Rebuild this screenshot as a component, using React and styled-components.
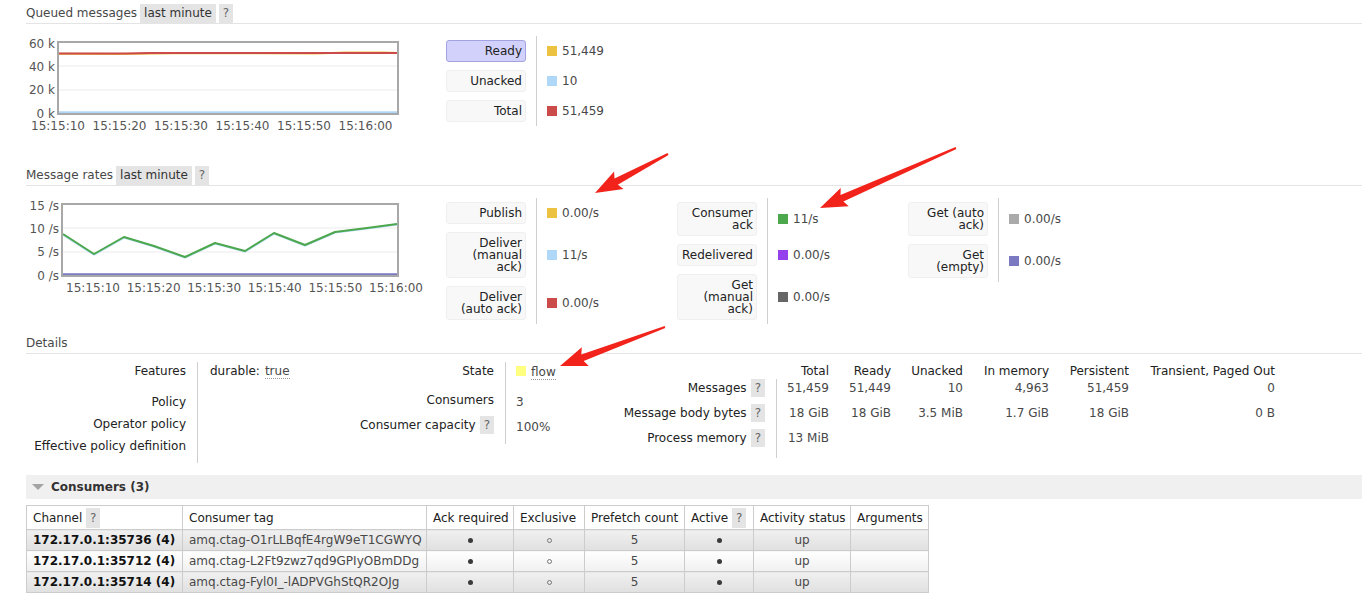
import React from "react";
import styled, { createGlobalStyle } from "styled-components";

const GlobalStyle = createGlobalStyle`
  html, body { margin: 0; padding: 0; background: #fff; }
  body {
    font-family: "DejaVu Sans", Verdana, sans-serif;
    font-size: 12px;
    color: #484848;
  }
  * { box-sizing: border-box; }
`;

const Page = styled.div`
  position: relative;
  width: 1362px;
  padding: 4px 0 8px 26px;
  overflow: hidden;
`;

const SectionTitle = styled.div`
  display: flex;
  align-items: center;
  gap: 3px;
  height: 20px;
  line-height: 19px;
  border-bottom: 1px solid #e4e4e4;
  margin-top: ${(p) => p.$mt || 0}px;
  color: #484848;
`;

const OptionChip = styled.span`
  background: #e4e4e4;
  color: #333;
  padding: 0 4px;
  height: 19px;
  line-height: 19px;
`;

const HelpChip = styled.span`
  display: inline-block;
  flex: none;
  background: #e4e4e4;
  color: #666;
  padding: 0 4px;
  height: ${(p) => p.$h || 19}px;
  line-height: ${(p) => p.$h || 19}px;
  margin-top: ${(p) => p.$mt || 0}px;
  vertical-align: middle;
`;

const ChartRow = styled.div`
  display: flex;
  align-items: flex-start;
  margin-top: ${(p) => p.$mt || 0}px;
`;

const ChartSvg = styled.svg`
  flex: none;
  margin: -1px 20px 1px 0;
  display: block;
`;

const AxisText = styled.text`
  font-family: "DejaVu Sans", Verdana, sans-serif;
  font-size: 12px;
  fill: #545454;
`;

const Legend = styled.div`
  display: flex;
  align-items: flex-start;
`;

const LegendGroup = styled.div`
  display: grid;
  grid-template-columns: 90px 141px;
`;

const LegendKeyCell = styled.div`
  padding: 4px 10px 4px 0;
`;

const LegendKey = styled.div`
  width: 80px;
  padding: 4px 3px;
  line-height: 12px;
  text-align: right;
  color: #222;
  background: ${(p) => (p.$active ? "#d1d1fb" : "#f8f8f8")};
  border: 1px solid ${(p) => (p.$active ? "#a2a2e2" : "#efefef")};
  border-radius: 3px;
`;

const LegendValueCell = styled.div`
  border-left: 1px solid #cfcfcf;
  padding: 4px 0 4px 10px;
  display: flex;
  align-items: center;
  color: #484848;
  white-space: nowrap;
`;

const Swatch = styled.span`
  flex: none;
  width: 10px;
  height: 10px;
  background: ${(p) => p.$c};
  margin-right: 5px;
`;

const DetailsRow = styled.div`
  display: flex;
  align-items: flex-start;
  margin-top: 8px;
`;

const FactGrid = styled.div`
  display: grid;
  grid-template-columns: ${(p) => p.$cols};
  flex: none;
`;

const FactTh = styled.div`
  height: ${(p) => p.$h}px;
  padding: 3px ${(p) => (p.$pr === undefined ? 11 : p.$pr)}px 0 0;
  display: flex;
  justify-content: flex-end;
  align-items: flex-start;
  gap: 4px;
  line-height: 12px;
  color: #222;
  white-space: nowrap;
`;

const FactTd = styled.div`
  height: ${(p) => p.$h}px;
  padding: ${(p) => (p.$pt === undefined ? 3 : p.$pt)}px 0 0
    ${(p) => (p.$pl === undefined ? 11 : p.$pl)}px;
  border-left: ${(p) => (p.$sep ? "1px solid #cfcfcf" : "none")};
  line-height: 12px;
  display: flex;
  align-items: flex-start;
  justify-content: ${(p) => (p.$right ? "flex-end" : "flex-start")};
  color: ${(p) => (p.$head ? "#222" : "#484848")};
  white-space: nowrap;
`;

const Strong = styled.span`
  color: #222;
  margin-right: 5px;
`;

const Abbr = styled.span`
  border-bottom: 1px dotted #999;
  padding-bottom: 1px;
`;

const CollapseBar = styled.div`
  margin-top: 12px;
  height: 24px;
  background: #f0f0f0;
  display: flex;
  align-items: center;
  gap: 7px;
  padding-left: 6px;
  font-weight: bold;
  color: #333;
`;

const Caret = styled.span`
  width: 0;
  height: 0;
  border-left: 6px solid transparent;
  border-right: 6px solid transparent;
  border-top: 6px solid #a3a3a3;
`;

const ListTable = styled.table`
  margin-top: 6px;
  border-collapse: collapse;
  table-layout: fixed;
  width: 902px;
`;

const ListTh = styled.th`
  height: 24px;
  padding: 0 6px;
  text-align: left;
  font-weight: normal;
  color: #222;
  border: 1px solid #cccccc;
  background: #fff;
  white-space: nowrap;
`;

const ListRow = styled.tr`
  & > td {
    background: ${(p) =>
      p.$alt
        ? "linear-gradient(#ffffff, #f0f0f0)"
        : "linear-gradient(#f0f0f0, #e0e0e0)"};
  }
`;

const ListTd = styled.td`
  height: 21px;
  padding: 0 6px;
  border: 1px solid #cccccc;
  text-align: ${(p) => (p.$center ? "center" : "left")};
  font-weight: ${(p) => (p.$bold ? "bold" : "normal")};
  color: ${(p) => (p.$bold ? "#111" : "#484848")};
  white-space: nowrap;
  overflow: hidden;
`;

const Dot = styled.span`
  display: inline-block;
  width: 5px;
  height: 5px;
  border-radius: 50%;
  background: #3a3a3a;
  vertical-align: middle;
`;

const Ring = styled.span`
  display: inline-block;
  width: 5px;
  height: 5px;
  border-radius: 50%;
  border: 1px solid #777;
  vertical-align: middle;
`;

const Annotations = styled.svg`
  position: absolute;
  left: 0;
  top: 0;
  pointer-events: none;
`;

/* ---------- charts ---------- */

function Chart({ cfg }) {
  const { plot, yTicks, yLabelX, xTicks, xStart, xStep, grid, series } = cfg;
  return (
    <ChartSvg width={400} height={100} viewBox="0 0 400 100">
      {grid.map((g) => (
        <line
          key={g}
          x1={plot.x}
          x2={plot.x + plot.w}
          y1={g}
          y2={g}
          stroke="#ebebeb"
          strokeWidth="1"
        />
      ))}
      {series.map((s, i) => (
        <polyline
          key={i}
          points={s.pts.map((p) => p.join(",")).join(" ")}
          fill="none"
          stroke={s.c}
          strokeWidth={s.w || 2}
          strokeLinejoin="round"
        />
      ))}
      <rect
        x={plot.x}
        y={plot.y}
        width={plot.w}
        height={plot.h}
        fill="none"
        stroke="#a8a8a8"
        strokeWidth="2"
      />
      {yTicks.map((t) => (
        <AxisText key={t.label} x={yLabelX} y={t.y + 4.5} textAnchor="end">
          {t.label}
        </AxisText>
      ))}
      {xTicks.map((t, i) => (
        <AxisText key={t} x={xStart + i * xStep} y={95} textAnchor="middle">
          {t}
        </AxisText>
      ))}
    </ChartSvg>
  );
}

const TIMES = ["15:15:10", "15:15:20", "15:15:30", "15:15:40", "15:15:50", "15:16:00"];

const queuedChart = {
  plot: { x: 32, y: 7, w: 340, h: 72 },
  yTicks: [
    { label: "60 k", y: 8 },
    { label: "40 k", y: 31 },
    { label: "20 k", y: 54 },
    { label: "0 k", y: 78 },
  ],
  yLabelX: 29,
  xTicks: TIMES,
  xStart: 32,
  xStep: 61.5,
  grid: [31, 55],
  series: [
    { c: "#afd8f8", w: 2.5, pts: [[32, 77.5], [372, 77.5]] },
    {
      c: "#edc240",
      pts: [[32, 18.8], [90, 19], [150, 18.2], [290, 18.4], [320, 17.4], [357, 17.4], [372, 17.9]],
    },
    {
      c: "#cb4b4b",
      pts: [[32, 18.4], [100, 18.6], [124, 17.9], [372, 17.9]],
    },
  ],
};

const green = [
  [37, 37], [68, 57], [98, 40], [128, 49], [159, 60], [189, 46],
  [219, 54], [248, 36], [279, 48], [309, 35], [341, 31], [371, 27],
];

const ratesChart = {
  plot: { x: 36, y: 7, w: 336, h: 72 },
  yTicks: [
    { label: "15 /s", y: 8 },
    { label: "10 /s", y: 31 },
    { label: "5 /s", y: 54 },
    { label: "0 /s", y: 78 },
  ],
  yLabelX: 33,
  xTicks: TIMES,
  xStart: 67,
  xStep: 60.6,
  grid: [31, 55],
  series: [
    { c: "#afd8f8", pts: green.map(([x, y]) => [x, y + 0.6]) },
    { c: "#4da74d", pts: green },
    { c: "#7c79c3", w: 2.5, pts: [[36, 77.5], [372, 77.5]] },
  ],
};

/* ---------- legends ---------- */

function LegendBlock({ rows }) {
  return (
    <LegendGroup>
      {rows.map((r) => (
        <React.Fragment key={r.label}>
          <LegendKeyCell>
            <LegendKey $active={r.active}>{r.label}</LegendKey>
          </LegendKeyCell>
          <LegendValueCell>
            <Swatch $c={r.c} />
            {r.value}
          </LegendValueCell>
        </React.Fragment>
      ))}
    </LegendGroup>
  );
}

const queuedLegend = [
  { label: "Ready", value: "51,449", c: "#edc240", active: true },
  { label: "Unacked", value: "10", c: "#afd8f8" },
  { label: "Total", value: "51,459", c: "#cb4b4b" },
];

const rateLegends = [
  [
    { label: "Publish", value: "0.00/s", c: "#edc240" },
    { label: "Deliver (manual ack)", value: "11/s", c: "#afd8f8" },
    { label: "Deliver (auto ack)", value: "0.00/s", c: "#cb4b4b" },
  ],
  [
    { label: "Consumer ack", value: "11/s", c: "#4da74d" },
    { label: "Redelivered", value: "0.00/s", c: "#9440ed" },
    { label: "Get (manual ack)", value: "0.00/s", c: "#666666" },
  ],
  [
    { label: "Get (auto ack)", value: "0.00/s", c: "#aaaaaa" },
    { label: "Get (empty)", value: "0.00/s", c: "#7c79c3" },
  ],
];

/* ---------- arrows ---------- */

function arrowPoints(tx, ty, px, py) {
  const dx = px - tx;
  const dy = py - ty;
  const L = Math.hypot(dx, dy);
  const ux = dx / L;
  const uy = dy / L;
  const nx = -uy;
  const ny = ux;
  const head = 24;
  const bx = tx + ux * (L - head);
  const by = ty + uy * (L - head);
  const pts = [
    [tx + nx * 1, ty + ny * 1],
    [bx + nx * 3.5, by + ny * 3.5],
    [bx - ux * 3 + nx * 10, by - uy * 3 + ny * 10],
    [px, py],
    [bx - ux * 3 - nx * 10, by - uy * 3 - ny * 10],
    [bx - nx * 3.5, by - ny * 3.5],
    [tx - nx * 1, ty - ny * 1],
  ];
  return pts.map((p) => p.map((v) => v.toFixed(1)).join(",")).join(" ");
}

const arrows = [
  [668, 154, 595, 193],
  [956, 148, 820, 208],
  [665, 327, 560, 366],
];

/* ---------- consumers ---------- */

const consumers = [
  { ch: "172.17.0.1:35736 (4)", tag: "amq.ctag-O1rLLBqfE4rgW9eT1CGWYQ" },
  { ch: "172.17.0.1:35712 (4)", tag: "amq.ctag-L2Ft9zwz7qd9GPIyOBmDDg" },
  { ch: "172.17.0.1:35714 (4)", tag: "amq.ctag-Fyl0I_-lADPVGhStQR2OJg" },
];

const colWidths = [156, 244, 87, 71, 100, 69, 97, 78];

export default function App() {
  return (
    <>
      <GlobalStyle />
      <Page>
        <SectionTitle>
          Queued messages
          <OptionChip>last minute</OptionChip>
          <HelpChip>?</HelpChip>
        </SectionTitle>
        <ChartRow $mt={12}>
          <Chart cfg={queuedChart} />
          <Legend>
            <LegendBlock rows={queuedLegend} />
          </Legend>
        </ChartRow>

        <SectionTitle $mt={30}>
          Message rates
          <OptionChip>last minute</OptionChip>
          <HelpChip>?</HelpChip>
        </SectionTitle>
        <ChartRow $mt={12}>
          <Chart cfg={ratesChart} />
          <Legend>
            {rateLegends.map((rows, i) => (
              <LegendBlock key={i} rows={rows} />
            ))}
          </Legend>
        </ChartRow>

        <SectionTitle $mt={10}>Details</SectionTitle>
        <DetailsRow>
          <FactGrid $cols="171px 150px">
            <FactTh $h={31}>Features</FactTh>
            <FactTd $h={31} $sep $pl={12}>
              <Strong>durable:</Strong>
              <Abbr>true</Abbr>
            </FactTd>
            <FactTh $h={22}>Policy</FactTh>
            <FactTd $h={22} $sep />
            <FactTh $h={22}>Operator policy</FactTh>
            <FactTd $h={22} $sep />
            <FactTh $h={22}>Effective policy definition</FactTh>
            <FactTd $h={22} $sep />
            <FactTh $h={4} />
            <FactTd $h={4} $sep />
          </FactGrid>

          <FactGrid $cols="158px 95px">
            <FactTh $h={29}>State</FactTh>
            <FactTd $h={29} $sep $pt={4} $pl={10}>
              <Swatch $c="#ffff80" />
              <Abbr>flow</Abbr>
            </FactTd>
            <FactTh $h={25}>Consumers</FactTh>
            <FactTd $h={25} $sep $pt={5} $pl={10}>3</FactTd>
            <FactTh $h={22}>
              Consumer capacity
              <HelpChip $h={18} $mt={-3}>?</HelpChip>
            </FactTh>
            <FactTd $h={22} $sep $pt={5} $pl={10}>100%</FactTd>
            <FactTh $h={6} />
            <FactTd $h={6} $sep />
          </FactGrid>

          <FactGrid $cols="176px 53px 62px 72px 86px 80px 146px">
            <FactTh $h={17} />
            {["Total", "Ready", "Unacked", "In memory", "Persistent", "Transient, Paged Out"].map(
              (h) => (
                <FactTd key={h} $h={17} $right $pl={0} $head>
                  {h}
                </FactTd>
              )
            )}
            {[
              ["Messages", ["51,459", "51,449", "10", "4,963", "51,459", "0"]],
              ["Message body bytes", ["18 GiB", "18 GiB", "3.5 MiB", "1.7 GiB", "18 GiB", "0 B"]],
              ["Process memory", ["13 MiB", "", "", "", "", ""]],
            ].map(([label, vals]) => (
              <React.Fragment key={label}>
                <FactTh $h={25}>
                  {label}
                  <HelpChip $h={18} $mt={-3}>?</HelpChip>
                </FactTh>
                {vals.map((v, i) => (
                  <FactTd key={i} $h={25} $right $pl={0} $sep={i === 0}>
                    {v}
                  </FactTd>
                ))}
              </React.Fragment>
            ))}
            <FactTh $h={4} />
            <FactTd $h={4} $sep />
          </FactGrid>
        </DetailsRow>

        <CollapseBar>
          <Caret />
          Consumers (3)
        </CollapseBar>
        <ListTable>
          <colgroup>
            {colWidths.map((w, i) => (
              <col key={i} style={{ width: w }} />
            ))}
          </colgroup>
          <thead>
            <tr>
              <ListTh>
                Channel <HelpChip $h={20}>?</HelpChip>
              </ListTh>
              <ListTh>Consumer tag</ListTh>
              <ListTh>Ack required</ListTh>
              <ListTh>Exclusive</ListTh>
              <ListTh>Prefetch count</ListTh>
              <ListTh>
                Active <HelpChip $h={20}>?</HelpChip>
              </ListTh>
              <ListTh>Activity status</ListTh>
              <ListTh>Arguments</ListTh>
            </tr>
          </thead>
          <tbody>
            {consumers.map((c, i) => (
              <ListRow key={c.ch} $alt={i % 2 === 1}>
                <ListTd $bold>{c.ch}</ListTd>
                <ListTd>{c.tag}</ListTd>
                <ListTd $center>
                  <Dot />
                </ListTd>
                <ListTd $center>
                  <Ring />
                </ListTd>
                <ListTd $center>5</ListTd>
                <ListTd $center>
                  <Dot />
                </ListTd>
                <ListTd $center>up</ListTd>
                <ListTd />
              </ListRow>
            ))}
          </tbody>
        </ListTable>

        <Annotations width={1362} height={600} viewBox="0 0 1362 600">
          {arrows.map((a, i) => (
            <polygon key={i} points={arrowPoints(...a)} fill="#f2231b" />
          ))}
        </Annotations>
      </Page>
    </>
  );
}
